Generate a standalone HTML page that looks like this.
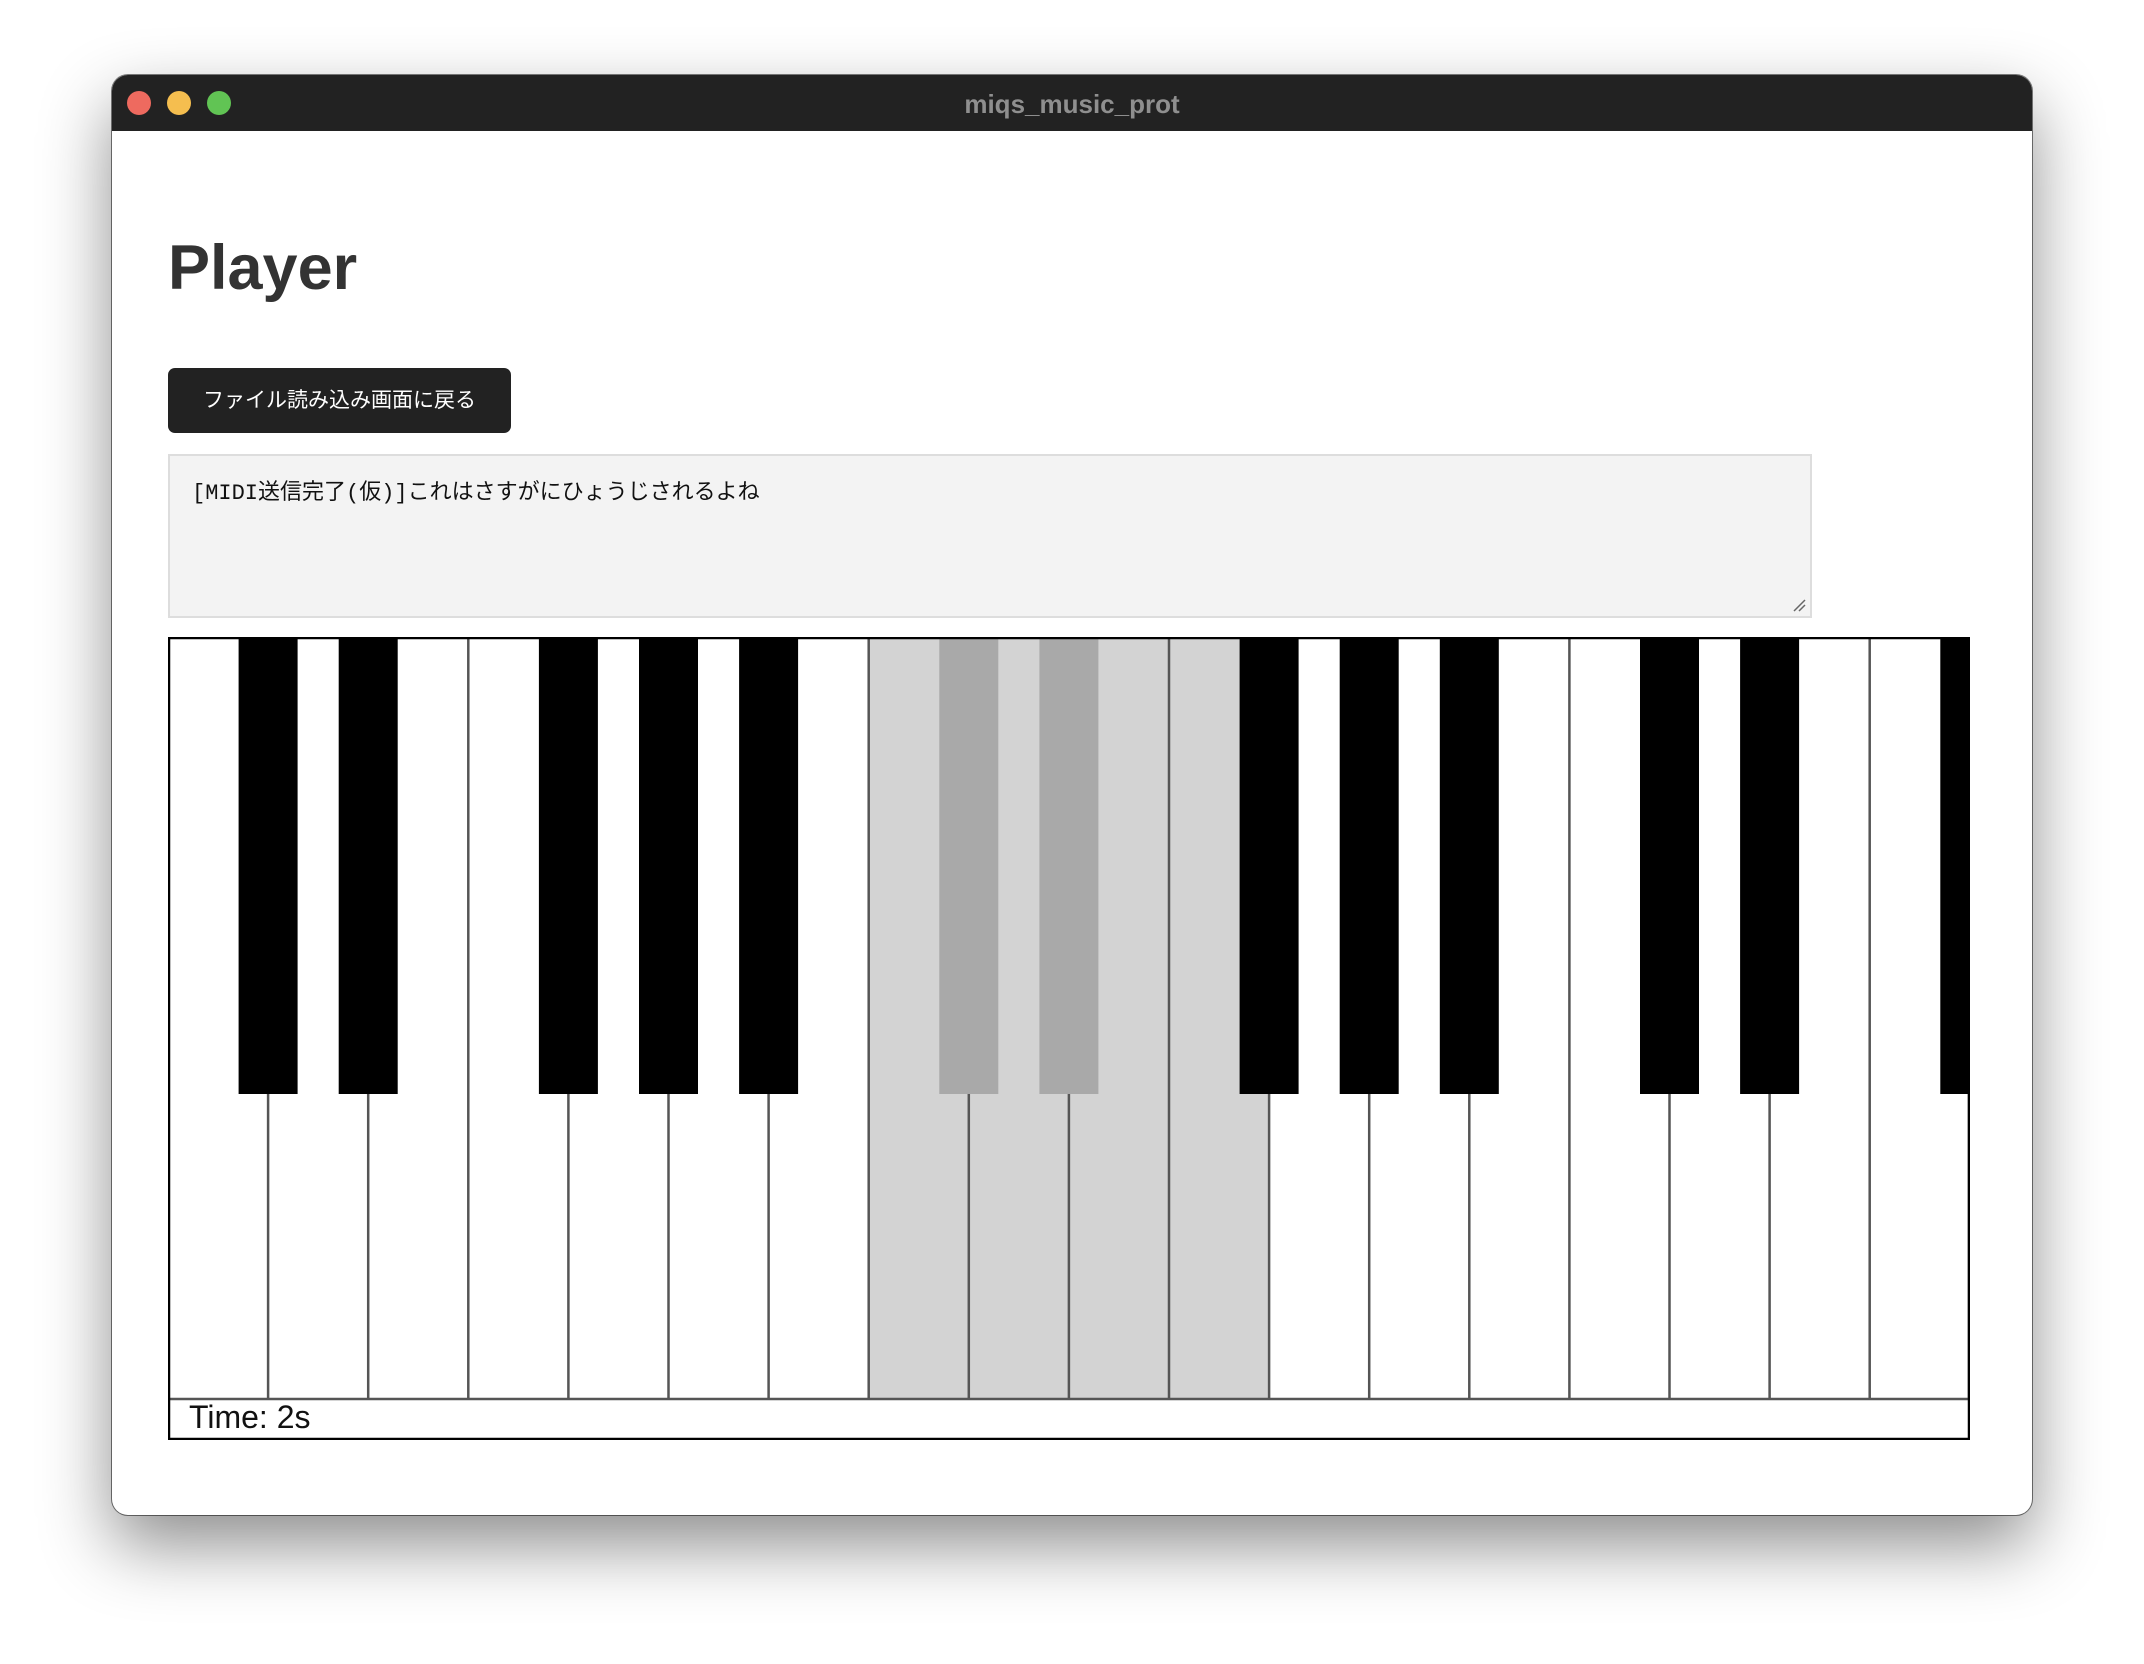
<!DOCTYPE html>
<html><head><meta charset="utf-8"><style>
html,body{margin:0;padding:0;}
body{width:2144px;height:1664px;background:#fff;position:relative;overflow:hidden;font-family:"Liberation Sans","Noto Sans CJK JP",sans-serif;}
.win{position:absolute;left:112px;top:75px;width:1920px;height:1440px;background:#fff;border-radius:16px;box-shadow:0 30px 70px rgba(0,0,0,0.45),0 0 0 1px rgba(0,0,0,0.5);overflow:hidden;}
.tb{position:absolute;left:0;top:0;width:100%;height:56px;background:#222;}
.dot{position:absolute;top:16px;width:24px;height:24px;border-radius:50%;}
.title{position:absolute;left:0;right:0;top:14px;text-align:center;color:#8f8f8f;font-weight:bold;font-size:26px;}
h1{position:absolute;left:56px;top:157px;margin:0;font-size:63px;font-weight:bold;color:#333;}
.btn{position:absolute;left:56px;top:293px;width:343px;height:65px;background:#222;border-radius:7px;color:#fff;font-size:21px;line-height:65px;text-align:center;}
.ta{position:absolute;left:56px;top:379px;width:1640px;height:160px;background:#f3f3f3;border:2px solid #ddd;}
.ta span{position:absolute;left:22px;top:18px;font-family:"Liberation Mono","Noto Sans CJK JP",monospace;font-size:22px;color:#111;}
svg.p{position:absolute;left:56px;top:562px;}
</style></head><body>
<div class="win">
<div class="tb">
<div class="dot" style="left:15px;background:#ee6a5f"></div>
<div class="dot" style="left:55px;background:#f5be4f"></div>
<div class="dot" style="left:95px;background:#61c454"></div>
<div class="title">miqs_music_prot</div>
</div>
<h1>Player</h1>
<div class="btn">ファイル読み込み画面に戻る</div>
<div class="ta"><span>[MIDI送信完了(仮)]これはさすがにひょうじされるよね</span>
<svg style="position:absolute;right:4px;bottom:4px" width="14" height="14"><path d="M2 13L13 2M7 13L13 7" stroke="#666" stroke-width="1.5"/></svg></div>
<svg class="p" width="1802" height="803" viewBox="0 0 1802 803">
<rect x="0" y="0" width="1802" height="803" fill="#fff"/>
<rect x="700.7" y="0" width="400.4" height="762" fill="#d3d3d3"/>
<g stroke="#555" stroke-width="2.5">
<line x1="100.1" y1="0" x2="100.1" y2="762"/><line x1="200.2" y1="0" x2="200.2" y2="762"/><line x1="300.3" y1="0" x2="300.3" y2="762"/><line x1="400.4" y1="0" x2="400.4" y2="762"/><line x1="500.5" y1="0" x2="500.5" y2="762"/><line x1="600.6" y1="0" x2="600.6" y2="762"/><line x1="700.7" y1="0" x2="700.7" y2="762"/><line x1="800.8" y1="0" x2="800.8" y2="762"/><line x1="900.9" y1="0" x2="900.9" y2="762"/><line x1="1001" y1="0" x2="1001" y2="762"/><line x1="1101.1" y1="0" x2="1101.1" y2="762"/><line x1="1201.2" y1="0" x2="1201.2" y2="762"/><line x1="1301.3" y1="0" x2="1301.3" y2="762"/><line x1="1401.4" y1="0" x2="1401.4" y2="762"/><line x1="1501.5" y1="0" x2="1501.5" y2="762"/><line x1="1601.6" y1="0" x2="1601.6" y2="762"/><line x1="1701.7" y1="0" x2="1701.7" y2="762"/><line x1="1801" y1="0" x2="1801" y2="762"/>
<line x1="0" y1="762" x2="1802" y2="762"/>
</g>
<g fill="#000">
<rect x="70.6" y="0" width="59" height="457"/><rect x="170.7" y="0" width="59" height="457"/>
<rect x="370.9" y="0" width="59" height="457"/><rect x="471" y="0" width="59" height="457"/><rect x="571.1" y="0" width="59" height="457"/>
<rect x="1071.6" y="0" width="59" height="457"/><rect x="1171.7" y="0" width="59" height="457"/><rect x="1271.8" y="0" width="59" height="457"/>
<rect x="1472" y="0" width="59" height="457"/><rect x="1572.1" y="0" width="59" height="457"/>
<rect x="1772.3" y="0" width="30" height="457"/>
</g>
<g fill="#a9a9a9"><rect x="771.3" y="0" width="59" height="457"/><rect x="871.4" y="0" width="59" height="457"/></g>
<text x="21" y="791" font-family="Liberation Sans, sans-serif" font-size="32" fill="#111">Time: 2s</text>
<rect x="1" y="1" width="1800" height="801" fill="none" stroke="#000" stroke-width="2.5"/>
</svg>
</div>
</body></html>
